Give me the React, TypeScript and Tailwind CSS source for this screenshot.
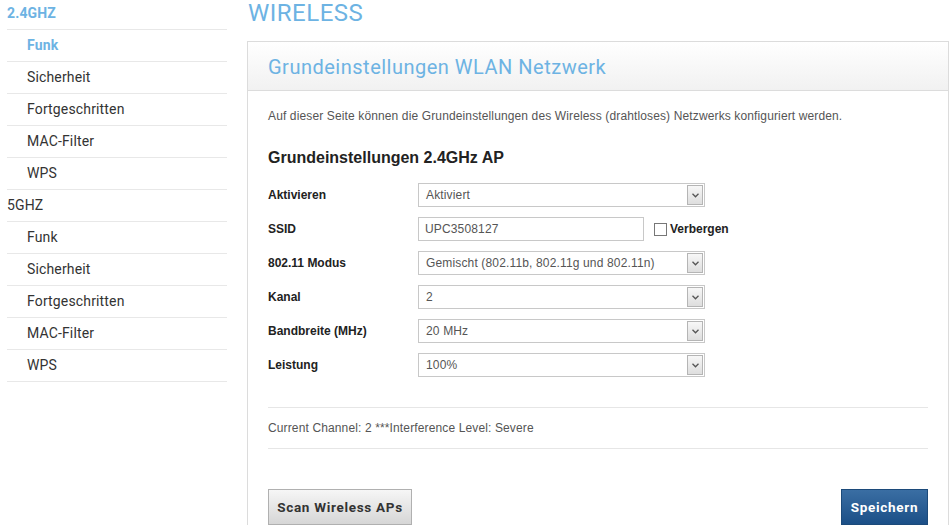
import React from "react";

const blue = "text-[#6db3e3]";

function NavHeader({ label, active, first }: { label: string; active?: boolean; first?: boolean }) {
  return (
    <div
      className={`flex items-center border-b border-[#e8e8e8] ${first ? "h-[30px] pb-[3px]" : "h-[32px]"} ${
        active ? `${blue} font-bold` : "text-[#333]"
      } text-[14px] tracking-[0.15px]`}
    >
      {label}
    </div>
  );
}

function NavItem({ label, active }: { label: string; active?: boolean }) {
  return (
    <div
      className={`flex h-[32px] items-center border-b border-[#e8e8e8] pl-[20px] text-[14px] tracking-[0.15px] ${
        active ? `${blue} font-bold` : "text-[#333]"
      }`}
    >
      {label}
    </div>
  );
}

function Chevron() {
  return (
    <svg width="7" height="5" viewBox="0 0 7 5">
      <path d="M0.5 0.8 L3.5 3.8 L6.5 0.8" fill="none" stroke="#555" strokeWidth="1.3" />
    </svg>
  );
}

function Select({ value }: { value: string }) {
  return (
    <div className="flex h-[24px] w-[287px] items-center border border-[#c8c8c8] bg-white">
      <div className="flex-1 pl-[7px] text-[12px] tracking-[0.15px] text-[#555]">{value}</div>
      <div className="mr-[1px] flex h-[20px] w-[16px] items-center justify-center border border-[#b5b5b5] bg-gradient-to-b from-[#f7f7f7] to-[#dedede]">
        <Chevron />
      </div>
    </div>
  );
}

function Row({ label, children }: { label: string; children: React.ReactNode }) {
  return (
    <div className="flex h-[24px] items-center">
      <div className="w-[150px] text-[12px] font-bold text-[#222]">{label}</div>
      {children}
    </div>
  );
}

export default function App() {
  const sans = { fontFamily: "Roboto, 'Liberation Sans', sans-serif" };
  return (
    <div className="flex h-[525px] w-[952px] overflow-hidden bg-white" style={{ fontFamily: "'Liberation Sans', Arial, sans-serif" }}>
      {/* sidebar */}
      <div className="ml-[7px] w-[220px] shrink-0" style={sans}>
        <NavHeader label="2.4GHZ" active first />
        <NavItem label="Funk" active />
        <NavItem label="Sicherheit" />
        <NavItem label="Fortgeschritten" />
        <NavItem label="MAC-Filter" />
        <NavItem label="WPS" />
        <NavHeader label="5GHZ" />
        <NavItem label="Funk" />
        <NavItem label="Sicherheit" />
        <NavItem label="Fortgeschritten" />
        <NavItem label="MAC-Filter" />
        <NavItem label="WPS" />
      </div>

      {/* main */}
      <div className="ml-[20px] flex w-[702px] shrink-0 flex-col">
        <div className={`h-[42px] pl-[1px] pt-[1px] text-[24px] leading-[24px] tracking-[0.5px] ${blue}`} style={sans}>
          WIRELESS
        </div>
        <div className="flex flex-1 flex-col border border-b-0 border-[#dcdcdc]">
          <div
            className={`flex h-[49px] items-center border-b border-[#dcdcdc] bg-gradient-to-b from-white to-[#f1f1f1] pl-[20px] pt-[2px] text-[20px] tracking-[0.5px] ${blue}`}
            style={sans}
          >
            Grundeinstellungen WLAN Netzwerk
          </div>
          <div className="flex flex-col px-[20px]">
            <p className="mt-[18px] text-[12px] leading-[14px] tracking-[0.13px] text-[#555]">
              Auf dieser Seite können die Grundeinstellungen des Wireless (drahtloses) Netzwerks konfiguriert werden.
            </p>
            <h3 className="mt-[25px] text-[16px] font-bold leading-[20px] text-[#222]">Grundeinstellungen 2.4GHz AP</h3>
            <div className="mt-[15px] flex flex-col gap-[10px]">
              <Row label="Aktivieren">
                <Select value="Aktiviert" />
              </Row>
              <Row label="SSID">
                <div className="flex h-[24px] w-[226px] items-center border border-[#c8c8c8] pl-[6px] text-[12px] tracking-[0.15px] text-[#555]">
                  UPC3508127
                </div>
                <div className="ml-[10px] h-[13px] w-[13px] border border-[#777] bg-white" />
                <span className="ml-[3px] text-[12px] font-bold text-[#222]">Verbergen</span>
              </Row>
              <Row label="802.11 Modus">
                <Select value="Gemischt (802.11b, 802.11g und 802.11n)" />
              </Row>
              <Row label="Kanal">
                <Select value="2" />
              </Row>
              <Row label="Bandbreite (MHz)">
                <Select value="20 MHz" />
              </Row>
              <Row label="Leistung">
                <Select value="100%" />
              </Row>
            </div>
            <div className="mt-[30px] border-t border-[#e6e6e6]" />
            <div className="flex h-[40px] items-center text-[12px] tracking-[0.13px] text-[#555]">
              Current Channel: 2 ***Interference Level: Severe
            </div>
            <div className="border-t border-[#e6e6e6]" />
            <div className="mt-[40px] flex justify-between">
              <button
                className="h-[36px] w-[144px] border border-[#b0b0b0] bg-gradient-to-b from-[#f6f6f6] to-[#d6d6d6] text-[13.5px] font-bold tracking-[0.7px] text-[#333]"
                style={sans}
              >
                Scan Wireless APs
              </button>
              <button
                className="h-[36px] w-[87px] border border-[#1c4a7a] bg-gradient-to-b from-[#3a6ea3] to-[#1b4f87] text-[13.5px] font-bold tracking-[0.7px] text-white"
                style={sans}
              >
                Speichern
              </button>
            </div>
          </div>
        </div>
      </div>
    </div>
  );
}
